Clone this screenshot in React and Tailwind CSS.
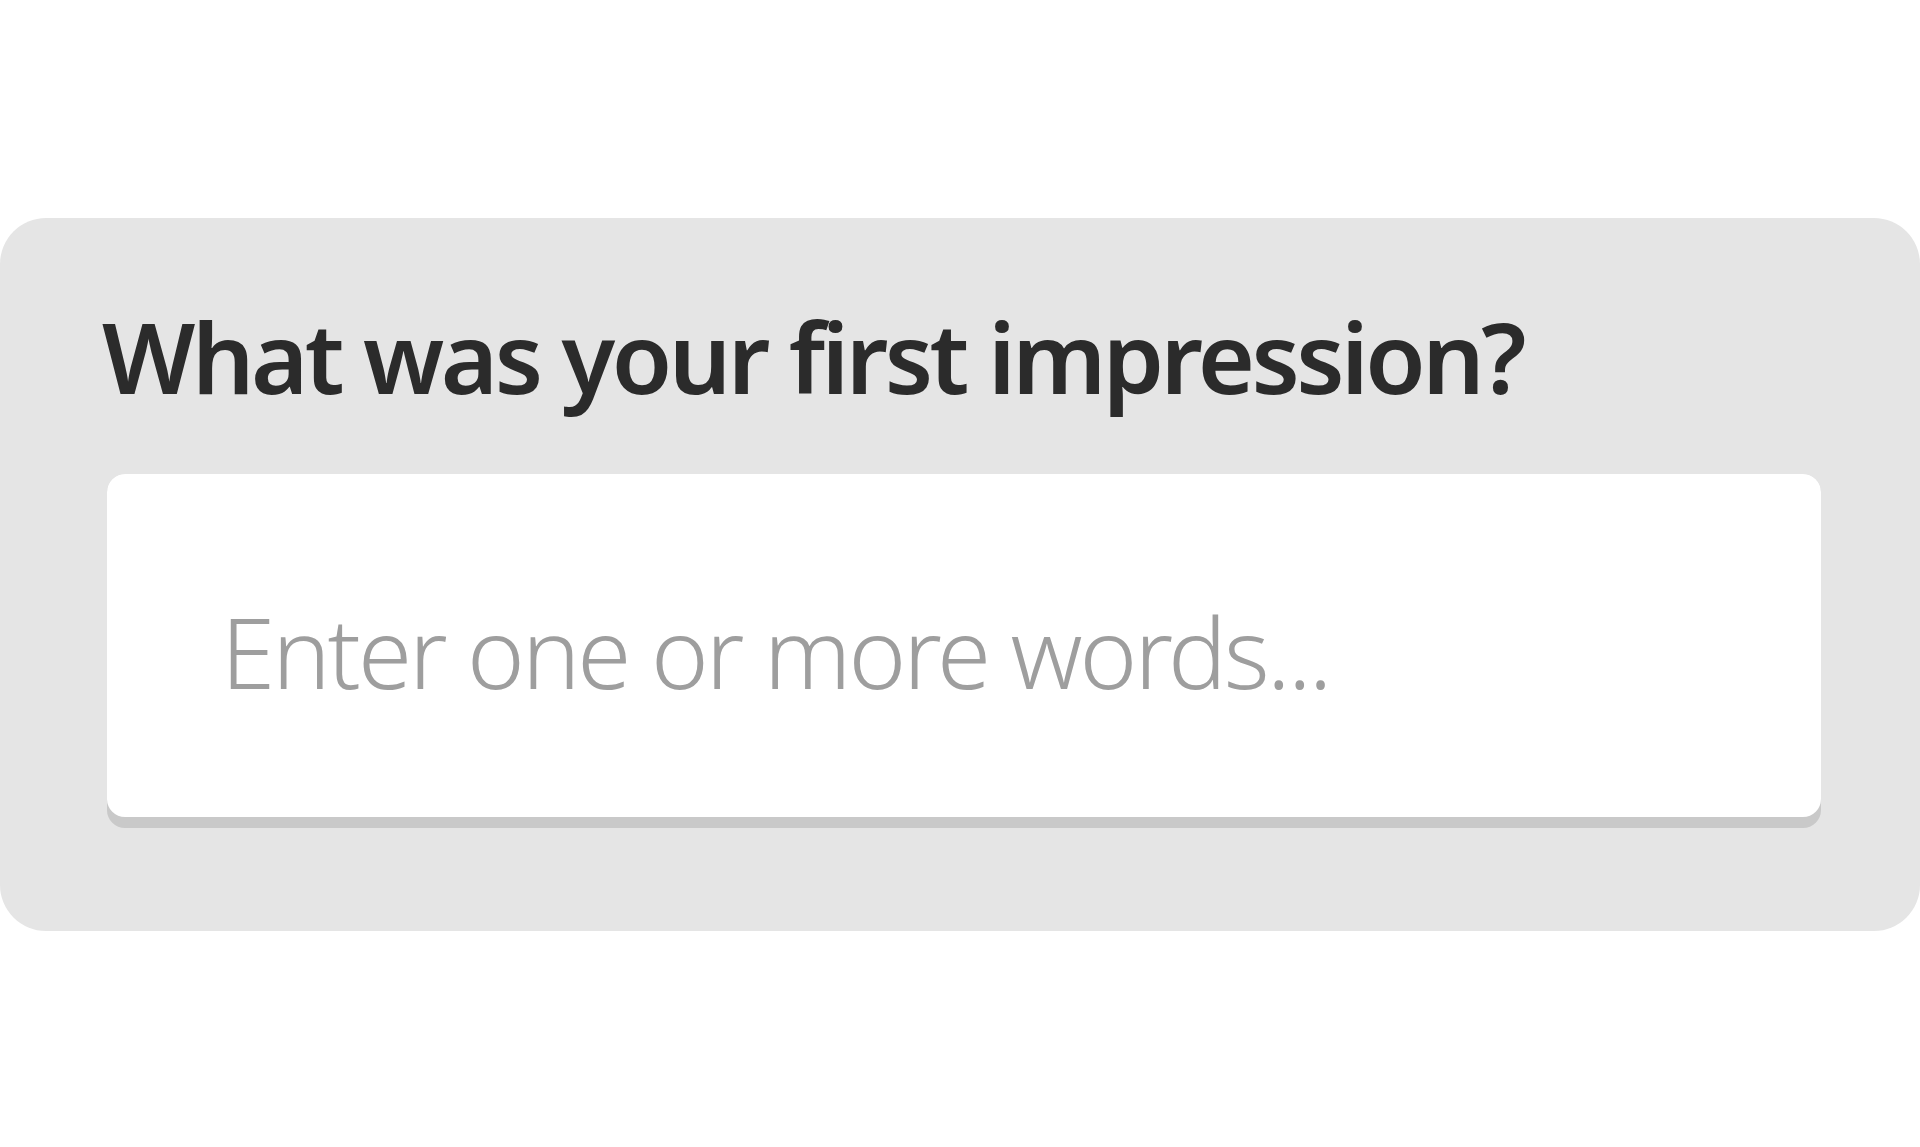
export default function App() {
  return (
    <div className="min-h-[1147px] w-full bg-white pt-[218px]" style={{ fontFamily: '"Noto Sans", "Open Sans", sans-serif' }}>
      <div className="h-[713px] w-full rounded-[46px] bg-[#e5e5e5] pl-[107px] pr-[99px] pt-[89px]">
        <h1 className="-ml-[5px] text-[98px] font-semibold leading-none tracking-[-3.5px] text-[#2b2b2b]">
          What was your first impression?
        </h1>
        <div className="mt-[69px] h-[354px] rounded-[18px] bg-[#c9c9c9]">
          <input
            type="text"
            placeholder="Enter one or more words..."
            className="h-[343px] w-full rounded-[18px] bg-white pl-[114px] pt-[10px] text-[98px] font-light leading-none tracking-[-3px] text-[#2b2b2b] outline-none placeholder:text-[#9e9e9e]"
          />
        </div>
      </div>
    </div>
  );
}
